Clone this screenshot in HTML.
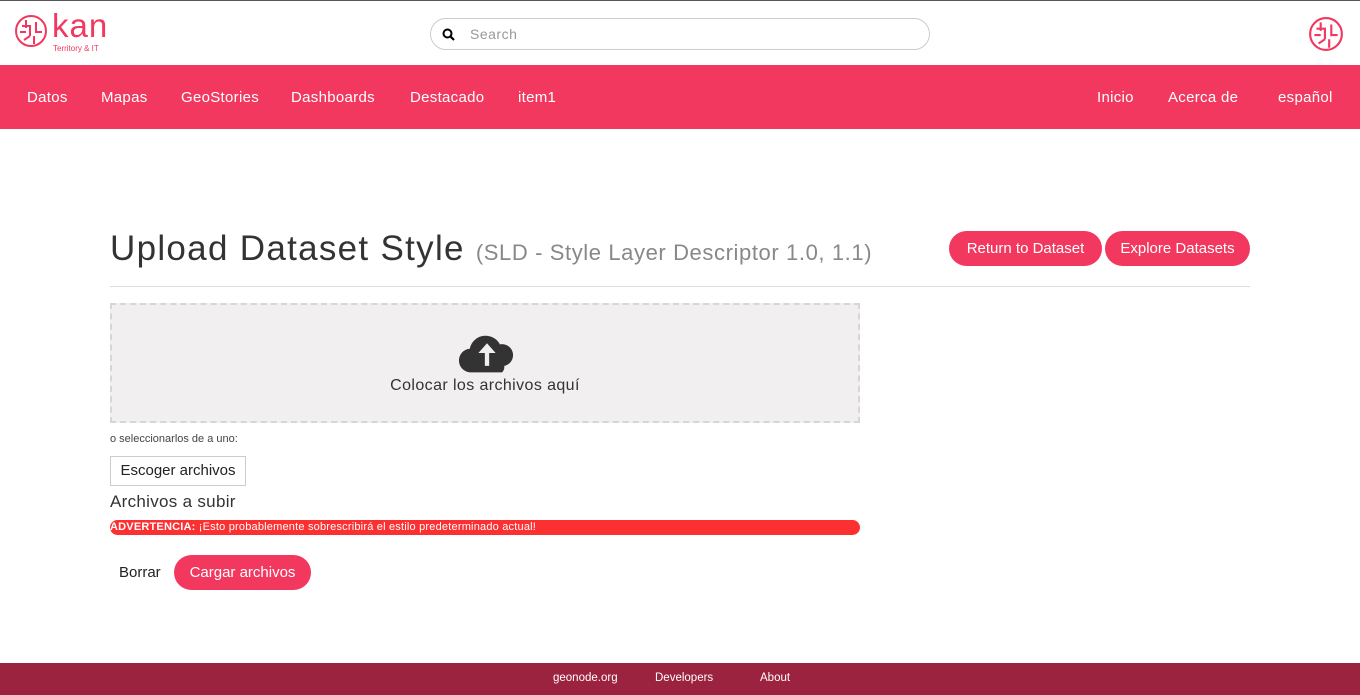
<!DOCTYPE html>
<html><head><meta charset="utf-8"><style>
*{box-sizing:border-box;margin:0;padding:0}
body{width:1360px;height:695px;overflow:hidden;font-family:"Liberation Sans",sans-serif;background:#fff;position:relative;color:#333}
.top{position:absolute;top:0;left:0;right:0;height:65px;border-top:1px solid #555;background:#fff}
.nav{position:absolute;top:65px;left:0;right:0;height:64px;background:#f2385f;color:#fff;font-size:15px;letter-spacing:0.3px}
.nav span{position:absolute;top:24px}
.search{position:absolute;left:430px;top:17px;width:500px;height:32px;border:1px solid #ccc;border-radius:16px}
.search span{position:absolute;left:39px;top:7px;color:#999;font-size:14px;letter-spacing:0.5px}
.btn{position:absolute;background:#f2385f;color:#fff;border-radius:18px;font-size:15px;text-align:center}
.foot{position:absolute;left:0;right:0;top:663px;height:32px;background:#9b2340;color:#fff;font-size:11.5px}
.foot span{position:absolute;top:9px}
</style></head><body>
<div class="top">
<svg style="position:absolute;left:14px;top:13px" width="34" height="34" viewBox="0 0 34 34" fill="none" stroke="#f2385f" stroke-width="2"><circle cx="17" cy="17" r="15"/><path d="M8 12h8v10M12 6v8M22 8v10h6M10 26l6-4M20 22v8M6 18h6"/></svg>
<div style="position:absolute;left:52px;top:6px;color:#f2385f;font-size:33px;letter-spacing:1px">kan</div>
<div style="position:absolute;left:53px;top:43px;color:#f2385f;font-size:8px">Territory &amp; IT</div>
<div class="search"><svg style="position:absolute;left:11px;top:9px" width="13" height="13" viewBox="0 0 13 13"><circle cx="5.5" cy="5.5" r="4" fill="none" stroke="#000" stroke-width="2"/><path d="M8.5 8.5l3.5 3.5" stroke="#000" stroke-width="2.2"/></svg><span>Search</span></div>
<svg style="position:absolute;left:1308px;top:15px" width="36" height="36" viewBox="0 0 34 34" fill="none" stroke="#f2385f" stroke-width="2"><circle cx="17" cy="17" r="15"/><path d="M8 12h8v10M12 6v8M22 8v10h6M10 26l6-4M20 22v8M6 18h6"/></svg>
</div>
<div class="nav">
<span style="left:27px">Datos</span><span style="left:101px">Mapas</span><span style="left:181px">GeoStories</span><span style="left:291px">Dashboards</span><span style="left:410px">Destacado</span><span style="left:518px">item1</span>
<span style="left:1097px">Inicio</span><span style="left:1168px">Acerca de</span><span style="left:1278px">español</span>
</div>
<div style="position:absolute;left:110px;top:229px;font-size:35px;color:#333;letter-spacing:1.3px;white-space:nowrap">Upload Dataset Style <span style="font-size:22px;color:#888;letter-spacing:0.6px">(SLD - Style Layer Descriptor 1.0, 1.1)</span></div>
<div class="btn" style="left:949px;top:231px;width:153px;height:35px;line-height:35px">Return to Dataset</div>
<div class="btn" style="left:1105px;top:231px;width:145px;height:35px;line-height:35px">Explore Datasets</div>
<div style="position:absolute;left:110px;top:286px;width:1140px;border-top:1px solid #ddd"></div>
<div style="position:absolute;left:110px;top:303px;width:750px;height:120px;background:#f1efef;border:2px dashed #d6d6d6">
<svg style="position:absolute;left:347px;top:26px" width="56" height="44" viewBox="0 0 52 40"><path d="M12 38a11 11 0 0 1-2-22 15 15 0 0 1 28-4 10 10 0 0 1 4 20 7 7 0 0 1-2 6z" fill="#333"/><path d="M24 32V20h-6l8-9 8 9h-6v12z" fill="#f1efef"/></svg>
<div style="position:absolute;top:72px;width:100%;text-align:center;font-size:16px;letter-spacing:0.4px">Colocar los archivos aquí</div>
</div>
<div style="position:absolute;left:110px;top:433px;font-size:11px;color:#444">o seleccionarlos de a uno:</div>
<div style="position:absolute;left:110px;top:456px;width:136px;height:30px;border:1px solid #ccc;font-size:15px;line-height:28px;text-align:center;color:#222">Escoger archivos</div>
<div style="position:absolute;left:110px;top:492px;font-size:17px;letter-spacing:0.3px">Archivos a subir</div>
<div style="position:absolute;left:110px;top:520px;width:750px;height:15px;background:#fc3030;border-radius:8px;color:#fff;font-size:11px;line-height:15px;letter-spacing:0.2px"><b>ADVERTENCIA:</b> ¡Esto probablemente sobrescribirá el estilo predeterminado actual!</div>
<div style="position:absolute;left:119px;top:564px;font-size:15px;color:#222">Borrar</div>
<div class="btn" style="left:174px;top:555px;width:137px;height:35px;line-height:35px">Cargar archivos</div>
<div class="foot"><span style="left:553px">geonode.org</span><span style="left:655px">Developers</span><span style="left:760px">About</span></div>
</body></html>
